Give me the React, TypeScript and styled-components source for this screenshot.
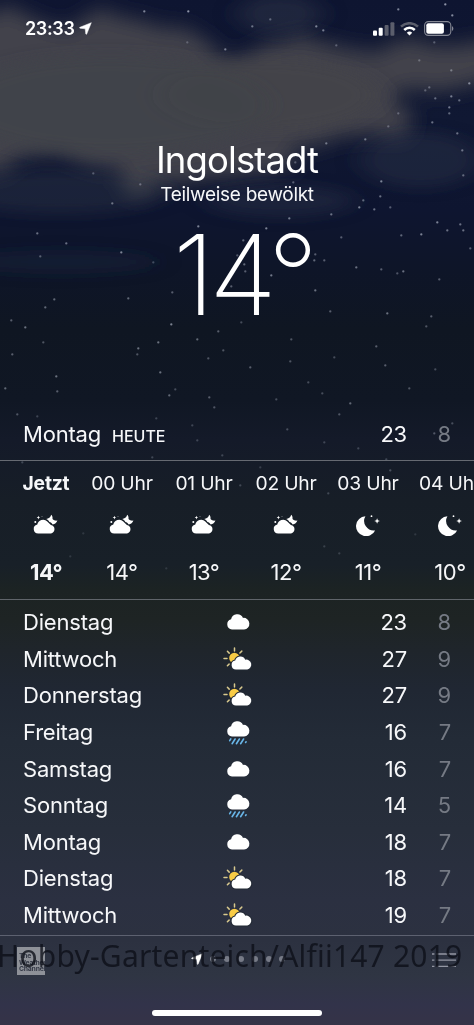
import React from 'react';
import styled, { createGlobalStyle } from 'styled-components';

const GlobalStyle = createGlobalStyle`
  * { box-sizing: border-box; }
  body { margin: 0; background: #10172a; }
`;

const Screen = styled.main`
  position: relative;
  display: flex;
  flex-direction: column;
  width: 474px;
  height: 1025px;
  overflow: hidden;
  color: #f6f7f9;
  font-family: Inter, "Liberation Sans", sans-serif;
  background: linear-gradient(
    180deg,
    #0e1531 0px, #101833 120px, #0e1530 210px, #0e1528 270px, #0f1622 330px, #101724 400px,
    #141a29 440px, #171e27 500px, #182028 565px, #1c2323 590px, #1e2424 620px, #1f252b 650px,
    #202733 690px, #232b37 740px, #272e3b 830px, #2b3041 900px, #2c3140 940px, #2f3543 975px,
    #32334a 1005px, #353347 1025px
  );
`;

const Sky = styled.svg`
  position: absolute;
  inset: 0;
  pointer-events: none;
`;

const StatusBar = styled.header`
  position: relative;
  display: flex;
  align-items: center;
  justify-content: space-between;
  height: 57px;
  padding: 0 20px 0 25px;
`;

const Clock = styled.div`
  display: flex;
  align-items: center;
  gap: 4px;
  font-size: 18px;
  font-weight: 600;
  letter-spacing: -0.35px;
  color: #fff;
`;

const Indicators = styled.div`
  display: flex;
  align-items: center;
  gap: 5px;
`;

const Summary = styled.section`
  position: relative;
  display: flex;
  flex-direction: column;
  align-items: center;
  height: 350px;
  padding-top: 82px;
`;

const City = styled.h1`
  margin: 0;
  font-size: 36.5px;
  line-height: 42px;
  font-weight: 400;
  letter-spacing: -0.9px;
  color: #fff;
`;

const Condition = styled.p`
  margin: 0;
  height: 27px;
  font-size: 19px;
  line-height: 28px;
  font-weight: 400;
  letter-spacing: -0.3px;
`;

const Temperature = styled.div`
  display: flex;
  margin-left: 11px;
  font-size: 111px;
  line-height: 134px;
  font-weight: 200;
  letter-spacing: -6px;
  color: #fff;
`;

const DayLine = styled.div`
  position: relative;
  display: grid;
  grid-template-columns: 200px 74px 1fr 44px;
  align-items: center;
  height: 36.6px;
  padding: 0 23px;
  font-size: 22px;
  letter-spacing: -0.2px;
`;

const TodayLine = styled(DayLine)`
  height: 54px;
  border-bottom: 1px solid #666a72;
`;

const DayName = styled.span`
  white-space: nowrap;
`;

const TodayTag = styled.span`
  margin-left: 11px;
  font-size: 16px;
  font-weight: 500;
  letter-spacing: 0px;
`;

const IconCell = styled.span`
  display: flex;
  width: 30px;
  justify-content: center;
`;

const High = styled.span`
  text-align: right;
`;

const Low = styled.span`
  text-align: right;
  color: #757a84;
`;

const Hourly = styled.section`
  position: relative;
  display: flex;
  height: 139px;
  padding-left: 11px;
  border-bottom: 1px solid #60656a;
  overflow: hidden;
`;

const Hour = styled.div<{ $now?: boolean }>`
  flex: 0 0 ${({ $now }) => ($now ? 70 : 82)}px;
  display: flex;
  flex-direction: column;
  align-items: center;
  font-weight: ${({ $now }) => ($now ? 700 : 400)};
`;

const HourLabel = styled.span`
  height: 51px;
  padding-top: 9px;
  font-size: 19.3px;
  line-height: 26px;
  letter-spacing: -0.2px;
  white-space: nowrap;
`;

const HourIcon = styled.span`
  display: flex;
  height: 28px;
`;

const HourTemp = styled.span`
  padding-top: 18px;
  font-size: 22px;
  line-height: 28px;
  letter-spacing: -0.5px;
`;

const Daily = styled.section`
  position: relative;
  height: 336px;
  padding-top: 4px;
  border-bottom: 1px solid #5d6170;
`;

const Footer = styled.footer`
  position: relative;
  display: flex;
  align-items: flex-start;
  justify-content: space-between;
  height: 74px;
  padding: 11px 18px 0 17px;
`;

const ChannelLogo = styled.div`
  display: flex;
  align-items: flex-end;
  width: 28px;
  height: 28px;
  padding: 0 0 2px 2px;
  font-size: 6.8px;
  line-height: 6.6px;
  font-weight: 700;
  letter-spacing: -0.2px;
  color: #343946;
  background: #8e9198;
`;

const Pages = styled.div`
  display: flex;
  align-items: center;
  gap: 7.8px;
  height: 24px;
  margin-left: -1px;
`;

const PageDot = styled.i`
  width: 6px;
  height: 6px;
  border-radius: 50%;
  background: #777b87;
`;

const Menu = styled.div`
  padding-top: 5px;
`;

const HomeBar = styled.div`
  position: relative;
  width: 170px;
  height: 6px;
  margin: 0 auto;
  border-radius: 3px;
  background: #fff;
`;

const Watermark = styled.div`
  position: absolute;
  left: -3px;
  top: 934px;
  font-family: "Noto Sans", sans-serif;
  font-size: 30px;
  line-height: 44px;
  letter-spacing: 0.2px;
  white-space: nowrap;
  color: rgba(12, 14, 23, 0.78);
`;

const stars: [number, number, number][] = [
  [144, 11, 0.6], [188, 11, 0.7], [187, 42, 0.3], [225, 49, 0.55], [252, 26, 0.5], [270, 19, 0.4],
  [316, 26, 0.6], [323, 30, 0.55], [336, 45, 0.35], [398, 9, 0.6], [445, 4, 0.7], [452, 15, 0.65],
  [434, 42, 0.35], [419, 60, 0.35], [451, 70, 0.45], [469, 83, 0.6], [429, 87, 0.4], [425, 90, 0.35],
  [435, 98, 0.45], [451, 96, 0.55], [459, 100, 0.45], [449, 107, 0.55], [449, 113, 0.45], [398, 113, 0.35],
  [432, 122, 0.5], [388, 126, 0.35], [457, 133, 0.5], [365, 139, 0.5], [326, 143, 0.5], [462, 150, 0.5],
  [463, 175, 0.45], [295, 162, 0.35], [293, 182, 0.4], [381, 181, 0.6], [380, 196, 0.5], [363, 200, 0.45],
  [359, 207, 0.6], [374, 209, 0.5], [390, 207, 0.4], [331, 214, 0.5], [289, 218, 0.55], [93, 173, 0.35],
  [140, 184, 0.4], [112, 203, 0.5], [198, 226, 0.6], [266, 228, 0.6], [437, 222, 0.6], [460, 224, 0.5],
  [463, 230, 0.5], [447, 230, 0.5], [421, 234, 0.6], [401, 235, 0.45], [341, 237, 0.4], [37, 233, 0.5],
  [66, 243, 0.5], [40, 256, 0.4], [121, 252, 0.6], [153, 262, 0.3], [243, 240, 0.45], [315, 254, 0.4],
  [314, 260, 0.45], [324, 260, 0.4], [356, 267, 0.5], [381, 269, 0.4], [397, 273, 0.35], [403, 271, 0.5],
  [439, 279, 0.4], [470, 248, 0.4], [237, 255, 0.35], [244, 264, 0.45], [245, 271, 0.4], [271, 275, 0.55],
  [231, 286, 0.4], [172, 292, 0.4], [128, 298, 0.45], [54, 299, 0.45], [45, 307, 0.45], [11, 320, 0.4],
  [25, 327, 0.5], [43, 342, 0.35], [12, 354, 0.4], [315, 290, 0.5], [330, 311, 0.4], [387, 313, 0.5],
  [431, 316, 0.4], [426, 326, 0.35], [171, 324, 0.6], [218, 331, 0.4], [241, 322, 0.3], [158, 342, 0.5],
  [197, 339, 0.45], [138, 348, 0.5], [137, 354, 0.35], [223, 350, 0.35], [208, 358, 0.35], [291, 339, 0.35],
  [290, 361, 0.35], [250, 367, 0.4], [160, 372, 0.5], [376, 346, 0.4], [385, 365, 0.4], [334, 357, 0.3],
  [435, 369, 0.3], [56, 376, 0.5], [57, 391, 0.4], [5, 388, 0.45], [175, 389, 0.3], [169, 395, 0.45],
  [209, 397, 0.4], [214, 407, 0.35], [276, 399, 0.3], [308, 382, 0.3], [322, 393, 0.3], [350, 403, 0.45],
  [409, 388, 0.35], [339, 414, 0.35], [17, 414, 0.35], [37, 416, 0.25], [156, 418, 0.25], [192, 425, 0.25],
  [197, 440, 0.25], [152, 457, 0.25], [222, 455, 0.25], [22, 462, 0.25], [287, 429, 0.3], [324, 442, 0.25],
  [358, 448, 0.25], [434, 433, 0.35], [452, 423, 0.3], [386, 459, 0.25], [390, 470, 0.3], [240, 485, 0.25],
  [328, 493, 0.25], [260, 467, 0.2], [83, 533, 0.15], [324, 546, 0.2], [339, 553, 0.2], [415, 534, 0.15],
  [70, 556, 0.15], [166, 568, 0.15],
];

function NightSky() {
  return (
    <Sky width="474" height="1025" viewBox="0 0 474 1025" aria-hidden="true">
      <defs>
        <filter id="cloud" x="-30%" y="-30%" width="160%" height="160%">
          <feTurbulence type="fractalNoise" baseFrequency="0.013 0.025" numOctaves="4" seed="8" result="noise" />
          <feDisplacementMap in="SourceGraphic" in2="noise" scale="46" xChannelSelector="R" yChannelSelector="G" />
          <feGaussianBlur stdDeviation="10" />
        </filter>
        <filter id="wisp" x="-30%" y="-60%" width="160%" height="220%">
          <feGaussianBlur stdDeviation="12 7" />
        </filter>
      </defs>
      <g filter="url(#cloud)">
        <path
          d="M-50 10 L15 4 L38 22 L78 30 L105 20 L150 22 L185 40 L222 66 L262 44 L300 34 L340 44 L372 52 L415 38 L455 48 L520 56 L520 84 L455 90 L402 92 L400 112 L425 128 L350 134 L300 138 L290 170 L205 182 L140 190 L105 172 L60 156 L20 168 L-50 162 Z"
          fill="#42434b"
        />
      </g>
      <g filter="url(#wisp)">
        <ellipse cx="110" cy="105" rx="160" ry="50" fill="#42444a" opacity="0.75" />
        <ellipse cx="270" cy="95" rx="110" ry="36" fill="#42424a" opacity="0.6" />
        <ellipse cx="60" cy="192" rx="110" ry="22" fill="#343b4d" opacity="0.32" />
        <ellipse cx="420" cy="160" rx="60" ry="28" fill="#303850" opacity="0.35" />
        <ellipse cx="280" cy="201" rx="75" ry="16" fill="#303850" opacity="0.35" />
        <ellipse cx="60" cy="262" rx="100" ry="12" fill="#27304a" opacity="0.25" />
        <ellipse cx="280" cy="14" rx="42" ry="20" fill="#343c50" opacity="0.4" />
      </g>
      {stars.map(([x, y, a]) => (
        <circle key={`${x}-${y}`} cx={x + 0.3} cy={y + 0.4} r="1.15" fill="#c5cbda" opacity={a} />
      ))}
    </Sky>
  );
}

function LocationArrow({ size = 13 }: { size?: number }) {
  return (
    <svg width={size} height={size} viewBox="0 0 13 13">
      <path d="M12.3.7 7.7 12.1c-.2.4-.8.4-.9-.1L6.2 6.8 1 6.2C.5 6.1.4 5.5.9 5.3Z" fill="#fff" stroke="#fff" strokeWidth=".5" strokeLinejoin="round" />
    </svg>
  );
}

function Signal() {
  return (
    <svg width="22" height="14" viewBox="0 0 22 14">
      <rect x="0" y="8.5" width="4" height="5.2" rx="1" fill="#fff" />
      <rect x="5.7" y="5.8" width="4" height="7.9" rx="1" fill="#fff" />
      <rect x="11.6" y="3" width="4" height="10.7" rx="1" fill="#5b5e6c" />
      <rect x="17.4" y="0.2" width="4" height="13.5" rx="1" fill="#5b5e6c" />
    </svg>
  );
}

function Wifi() {
  return (
    <svg width="19" height="14" viewBox="0 0 19 14" fill="none">
      <path d="M1 4.6a12.3 12.3 0 0 1 17 0" stroke="#5b5e6c" strokeWidth="2.5" />
      <path d="M4.2 8a7.6 7.6 0 0 1 10.6 0" stroke="#fff" strokeWidth="2.5" />
      <path d="M9.5 13.5 6.8 10.8a4 4 0 0 1 5.4 0Z" fill="#fff" />
    </svg>
  );
}

function Battery() {
  return (
    <svg width="30" height="15" viewBox="0 0 30 15">
      <rect x=".6" y=".6" width="26.2" height="13.8" rx="3.8" fill="none" stroke="#858894" strokeWidth="1.1" />
      <rect x="2.3" y="2.3" width="17.6" height="10.4" rx="2" fill="#fff" />
      <path d="M28 5.2c1.8.7 1.8 4 0 4.7Z" fill="#858894" />
    </svg>
  );
}

const CLOUD = 'M6 16.5A5.2 5.2 0 0 1 5.1 6.3 6.3 6.3 0 0 1 17 4.9a5.8 5.8 0 0 1 1.1 11.6Z';

type Sky = 'cloud' | 'sun' | 'rain' | 'cloudNight' | 'moon';

function WeatherIcon({ kind }: { kind: Sky }) {
  if (kind === 'cloudNight') {
    return (
      <svg width="26" height="24" viewBox="0 0 26 24" fill="#fff">
        <path d="M5.3 21.5a4.5 4.5 0 0 1-1-8.9 6 6 0 0 1 10-3.2l3.6 3.5a4.4 4.4 0 0 1 .2 8.6Z" />
        <path d="M13.2 7c2.5-.4 4.3-1.7 5-4.3 1 .7 1.6 2.5 1.3 4.4 1.4 1.4 3 1.8 4.9 1.5-.8 2.4-2.5 3.7-4.7 3.9-1-1.6-2-2.2-3.3-2.5-.6-1.4-1.8-2.3-3.2-3Z" />
        <path d="m5.4 3.8.5 1.3 1.3.5-1.3.5-.5 1.3-.5-1.3-1.3-.5 1.3-.5Z" />
        <circle cx="2.3" cy="10" r="1" />
        <circle cx="9" cy="4.4" r=".5" opacity=".5" />
      </svg>
    );
  }
  if (kind === 'moon') {
    return (
      <svg width="24" height="24" viewBox="0 0 24 24" fill="#fff">
        <path d="M9.4 4.2a10 10 0 1 0 9.7 14.2A9.6 9.6 0 0 1 9.4 4.2Z" />
        <path d="m21.1 6.2.8 2 2 .8-2 .8-.8 2-.8-2-2-.8 2-.8Z" />
        <circle cx="15.5" cy="4.2" r=".9" />
      </svg>
    );
  }
  if (kind === 'sun') {
    return (
      <svg width="30" height="24" viewBox="0 0 30 24">
        <g stroke="#d8c98e" strokeWidth="1.5" strokeLinecap="round">
          <path d="M11.5 1v3M4.4 4.3l1.8 1.8M18.8 4.1l-1.9 1.9M1 11.6h3M4.4 18.8l1.7-1.7" />
        </g>
        <circle cx="11.4" cy="11" r="5.2" fill="#f8cb45" />
        <path d="M13 22.5a4.5 4.5 0 0 1-.8-8.9 5.3 5.3 0 0 1 10-.9 4.9 4.9 0 1 1 2.1 9.8Z" fill="#fff" stroke="#232a35" strokeWidth="2.2" paintOrder="stroke" />
      </svg>
    );
  }
  return (
    <svg width="24" height={kind === 'rain' ? 25 : 18} viewBox={kind === 'rain' ? '0 0 24 25' : '0 0 24 18'}>
      <path d={CLOUD} fill="#fff" />
      {kind === 'rain' && (
        <path
          d="m4.8 18.9-1.1 1.8M9.1 19l-3 4.7M13.4 19l-3 4.7M17.6 19l-3 4.7M20 21.8l-.4.7"
          stroke="#69b6e8"
          strokeWidth="1.6"
          strokeLinecap="round"
        />
      )}
    </svg>
  );
}

const hours: { label: string; icon: Sky; temp: string }[] = [
  { label: 'Jetzt', icon: 'cloudNight', temp: '14°' },
  { label: '00 Uhr', icon: 'cloudNight', temp: '14°' },
  { label: '01 Uhr', icon: 'cloudNight', temp: '13°' },
  { label: '02 Uhr', icon: 'cloudNight', temp: '12°' },
  { label: '03 Uhr', icon: 'moon', temp: '11°' },
  { label: '04 Uhr', icon: 'moon', temp: '10°' },
];

const days: { name: string; icon: Sky; high: number; low: number }[] = [
  { name: 'Dienstag', icon: 'cloud', high: 23, low: 8 },
  { name: 'Mittwoch', icon: 'sun', high: 27, low: 9 },
  { name: 'Donnerstag', icon: 'sun', high: 27, low: 9 },
  { name: 'Freitag', icon: 'rain', high: 16, low: 7 },
  { name: 'Samstag', icon: 'cloud', high: 16, low: 7 },
  { name: 'Sonntag', icon: 'rain', high: 14, low: 5 },
  { name: 'Montag', icon: 'cloud', high: 18, low: 7 },
  { name: 'Dienstag', icon: 'sun', high: 18, low: 7 },
  { name: 'Mittwoch', icon: 'sun', high: 19, low: 7 },
];

export default function App() {
  return (
    <Screen>
      <GlobalStyle />
      <NightSky />
      <StatusBar>
        <Clock>
          23:33
          <LocationArrow />
        </Clock>
        <Indicators>
          <Signal />
          <Wifi />
          <Battery />
        </Indicators>
      </StatusBar>
      <Summary>
        <City>Ingolstadt</City>
        <Condition>Teilweise bewölkt</Condition>
        <Temperature>14°</Temperature>
      </Summary>
      <TodayLine>
        <DayName>
          Montag<TodayTag>HEUTE</TodayTag>
        </DayName>
        <span />
        <High>23</High>
        <Low>8</Low>
      </TodayLine>
      <Hourly>
        {hours.map((h, i) => (
          <Hour key={h.label} $now={i === 0}>
            <HourLabel>{h.label}</HourLabel>
            <HourIcon>
              <WeatherIcon kind={h.icon} />
            </HourIcon>
            <HourTemp>{h.temp}</HourTemp>
          </Hour>
        ))}
      </Hourly>
      <Daily>
        {days.map((d, i) => (
          <DayLine key={i}>
            <DayName>{d.name}</DayName>
            <IconCell>
              <WeatherIcon kind={d.icon} />
            </IconCell>
            <High>{d.high}</High>
            <Low>{d.low}</Low>
          </DayLine>
        ))}
      </Daily>
      <Footer>
        <ChannelLogo>
          <span>
            The
            <br />
            Weather
            <br />
            Channel
          </span>
        </ChannelLogo>
        <Pages>
          <LocationArrow size={12} />
          {[0, 1, 2, 3, 4, 5].map((n) => (
            <PageDot key={n} />
          ))}
        </Pages>
        <Menu>
          <svg width="24" height="16" viewBox="0 0 24 16" stroke="#9497a3" strokeWidth="1.3">
            <path d="M0 2h2.4M4.4 2H24M0 8.2h2.4M4.4 8.2H24M0 14.4h2.4M4.4 14.4H24" />
          </svg>
        </Menu>
      </Footer>
      <HomeBar />
      <Watermark>Hobby-Gartenteich/Alfii147 2019</Watermark>
    </Screen>
  );
}
